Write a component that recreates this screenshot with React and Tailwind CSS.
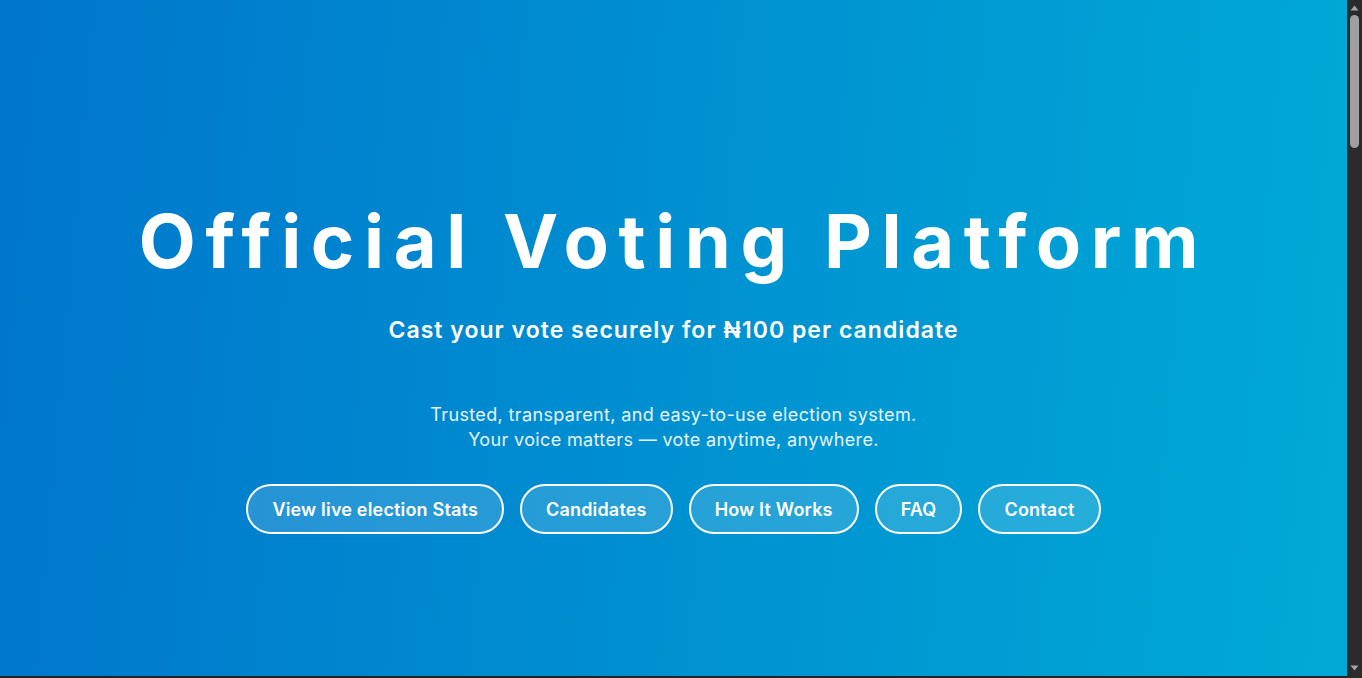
import React from "react";

const buttons = ["View live election Stats", "Candidates", "How It Works", "FAQ", "Contact"];

function Scrollbar() {
  return (
    <div className="w-[15px] h-full bg-[#2b2b2b] flex flex-col items-center">
      <div className="h-[15px] flex items-center justify-center">
        <svg width="9" height="6" viewBox="0 0 9 6">
          <path d="M4.5 0.5 L8.5 5.5 L0.5 5.5 Z" fill="#a3a3a3" />
        </svg>
      </div>
      <div className="w-[9px] h-[133px] rounded-full bg-[#9f9f9f]" />
      <div className="flex-1" />
      <div className="h-[15px] flex items-center justify-center mb-[3px]">
        <svg width="9" height="6" viewBox="0 0 9 6">
          <path d="M0.5 0.5 L8.5 0.5 L4.5 5.5 Z" fill="#a3a3a3" />
        </svg>
      </div>
    </div>
  );
}

export default function App() {
  return (
    <div className="h-[678px] overflow-hidden flex bg-[#222222] font-['Inter','Noto_Sans',sans-serif]">
      <div className="flex-1 flex flex-col">
        <section className="h-[676px] bg-[linear-gradient(95deg,#0076cc,#00aad6)] flex flex-col items-center pt-[197px] text-white">
          <h1 className="text-[74px] leading-[89px] font-bold tracking-[0.13em] text-center">
            Official Voting Platform
          </h1>
          <h2 className="mt-[28px] text-[23px] leading-[33px] font-semibold tracking-[0.045em]">
            Cast your vote securely for ₦100 per candidate
          </h2>
          <p className="mt-[55px] text-[18px] leading-[25px] text-center text-white/90 tracking-[0.02em]">
            Trusted, transparent, and easy-to-use election system.
            <br />
            Your voice matters — vote anytime, anywhere.
          </p>
          <div className="mt-[32px] flex gap-4">
            {buttons.map((b) => (
              <button
                key={b}
                className="h-[50px] px-6 rounded-full border-2 border-white bg-white/15 text-[18px] font-semibold tracking-[0.01em] text-white"
              >
                {b}
              </button>
            ))}
          </div>
        </section>
        <div className="flex-1 bg-[#222222]" />
      </div>
      <Scrollbar />
    </div>
  );
}
